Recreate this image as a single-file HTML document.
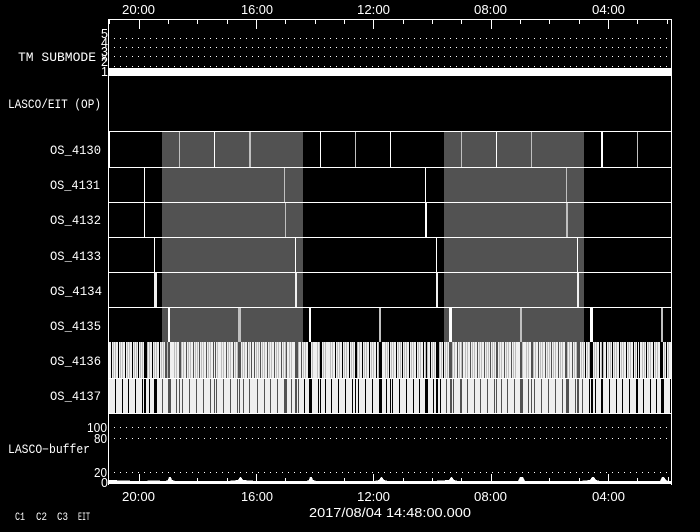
<!DOCTYPE html>
<html><head><meta charset="utf-8"><style>
html,body{margin:0;padding:0;background:#000;width:700px;height:532px;overflow:hidden}
svg{display:block}
text{font-family:"Liberation Mono",monospace;fill:#fff;font-size:12.5px}
.t{font-family:"Liberation Sans",sans-serif;font-size:12.5px}
</style></head><body>
<svg width="700" height="532" viewBox="0 0 700 532" xmlns="http://www.w3.org/2000/svg" shape-rendering="crispEdges">
<rect width="700" height="532" fill="#000"/>
<!-- gray regions -->
<path fill="#525252" d="M162 132h141v210h-141zM444 132h140v210h-140z"/>
<!-- bar rows -->
<rect x="109" y="342" width="562" height="36" fill="#f0f0f0"/>
<rect x="109" y="378" width="562" height="35" fill="#eeeeee"/>
<path stroke="#bdbdbd" stroke-width="36" fill="none" d="M113 360h1m1 0h1M120 360h1m1 0h1M127 360h1m1 0h1M134 360h1m1 0h1M140 360h1m1 0h1M147 360h1m1 0h1M154 360h1m1 0h1M161 360h1m1 0h1M167 360h1m1 0h1M174 360h1m1 0h1M181 360h1m1 0h1M188 360h1m1 0h1M195 360h1m1 0h1M201 360h1m1 0h1M208 360h1m1 0h1M215 360h1m1 0h1M221 360h1m1 0h1M228 360h1m1 0h1M235 360h1m1 0h1M242 360h1m1 0h1M249 360h1m1 0h1M256 360h1m1 0h1M262 360h1m1 0h1M269 360h1m1 0h1M276 360h1m1 0h1M283 360h1m1 0h1M289 360h1m1 0h1M296 360h1m1 0h1M303 360h1m1 0h1M310 360h1m1 0h1M317 360h1m1 0h1M323 360h1m1 0h1M330 360h1m1 0h1M337 360h1m1 0h1M344 360h1m1 0h1M351 360h1m1 0h1M357 360h1m1 0h1M364 360h1m1 0h1M371 360h1m1 0h1M378 360h1m1 0h1M385 360h1m1 0h1M391 360h1m1 0h1M398 360h1m1 0h1M404 360h1m1 0h1M411 360h1m1 0h1M418 360h1m1 0h1M425 360h1m1 0h1M432 360h1m1 0h1M439 360h1m1 0h1M445 360h1m1 0h1M452 360h1m1 0h1M459 360h1m1 0h1M465 360h1m1 0h1M472 360h1m1 0h1M479 360h1m1 0h1M486 360h1m1 0h1M492 360h1m1 0h1M499 360h1m1 0h1M506 360h1m1 0h1M513 360h1m1 0h1M520 360h1m1 0h1M526 360h1m1 0h1M533 360h1m1 0h1M540 360h1m1 0h1M547 360h1m1 0h1M553 360h1m1 0h1M560 360h1m1 0h1M567 360h1m1 0h1M574 360h1m1 0h1M581 360h1m1 0h1M587 360h1m1 0h1M594 360h1m1 0h1M601 360h1m1 0h1M608 360h1m1 0h1M614 360h1m1 0h1M621 360h1m1 0h1M628 360h1m1 0h1M635 360h1m1 0h1M642 360h1m1 0h1M648 360h1m1 0h1M655 360h1m1 0h1M662 360h1m1 0h1M668 360h1"/>
<path stroke="#000" stroke-width="36" fill="none" d="M111 360h1M118 360h1M125 360h1M132 360h1M138 360h1M144 360h3M152 360h1M159 360h1M308 360h3M320 360h2M335 360h1M342 360h1M349 360h1M355 360h2M362 360h1M369 360h1M376 360h1M379 360h3M389 360h1M396 360h1M402 360h1M409 360h1M416 360h1M423 360h1M426 360h1M430 360h1M436 360h3M443 360h1M585 360h1M590 360h3M599 360h1M602 360h1M606 360h1M612 360h1M619 360h1M626 360h1M633 360h1M637 360h1M639 360h1M646 360h1M653 360h1M660 360h3M666 360h1"/>
<path stroke="#525252" stroke-width="36" fill="none" d="M165 360h2M168 360h2M179 360h2M186 360h1M193 360h1M199 360h1M206 360h1M213 360h1M215 360h1M226 360h1M233 360h1M238 360h3M247 360h1M251 360h1M254 360h1M260 360h1M267 360h1M274 360h1M281 360h1M286 360h1M295 360h3M301 360h1M449 360h3M457 360h1M462 360h1M470 360h1M477 360h1M484 360h1M490 360h1M496 360h2M504 360h1M511 360h1M520 360h2M531 360h2M538 360h1M545 360h1M551 360h1M558 360h1M565 360h2M572 360h1M577 360h3"/>
<path stroke="#000" stroke-width="35" fill="none" d="M115 395.5h1M122 395.5h1M128 395.5h1M135 395.5h1M142 395.5h1M144 395.5h2M149 395.5h1M154 395.5h3M304 395.5h1M309 395.5h3M318 395.5h1M320 395.5h1M325 395.5h1M331 395.5h1M338 395.5h1M345 395.5h1M352 395.5h1M355 395.5h1M358 395.5h1M365 395.5h1M372 395.5h1M379 395.5h3M386 395.5h1M390 395.5h1M392 395.5h1M399 395.5h1M406 395.5h1M413 395.5h1M419 395.5h1M425 395.5h3M433 395.5h1M436 395.5h2M440 395.5h1M589 395.5h1M591 395.5h2M595 395.5h1M601 395.5h2M609 395.5h1M616 395.5h1M622 395.5h1M629 395.5h1M636 395.5h2M643 395.5h1M650 395.5h1M656 395.5h1M661 395.5h3M670 395.5h1"/>
<path stroke="#525252" stroke-width="35" fill="none" d="M162 395.5h1M168 395.5h3M176 395.5h1M179 395.5h1M182 395.5h1M189 395.5h1M196 395.5h1M203 395.5h1M210 395.5h1M214 395.5h1M216 395.5h1M223 395.5h1M230 395.5h1M237 395.5h1M239 395.5h1M243 395.5h1M249 395.5h1M257 395.5h1M264 395.5h1M270 395.5h1M277 395.5h1M284 395.5h3M291 395.5h1M295 395.5h2M298 395.5h1M446 395.5h1M450 395.5h2M453 395.5h1M460 395.5h2M467 395.5h1M474 395.5h1M480 395.5h1M487 395.5h1M494 395.5h1M496 395.5h1M501 395.5h1M507 395.5h1M514 395.5h1M520 395.5h3M528 395.5h1M531 395.5h1M534 395.5h1M541 395.5h1M548 395.5h1M555 395.5h1M562 395.5h1M566 395.5h3M575 395.5h1M577 395.5h2M582 395.5h1"/>
<!-- event bars -->
<path fill="#fff" d="M214 132h1v35h-1zM320 132h1v35h-1zM390 132h1v35h-1zM496 132h1v35h-1zM601 132h2v35h-2zM109 132h1v35h-1zM144 167h1v70h-1zM425 167h1v35h-1zM425 202h2v35h-2zM154 237h1v35h-1zM295 237h1v35h-1zM436 237h1v35h-1zM577 237h1v35h-1zM168 307h2v35h-2zM309 307h2v35h-2zM449 307h3v35h-3zM590 307h3v35h-3z"/>
<path fill="#f0f0f0" d="M154 272h3v35h-3zM295 272h2v35h-2zM436 272h2v35h-2zM577 272h2v35h-2z"/>
<path fill="#c0c0c0" d="M179 132h1v35h-1zM249 132h2v35h-2zM355 132h1v35h-1zM461 132h1v35h-1zM531 132h1v35h-1zM637 132h1v35h-1zM284 167h1v35h-1zM566 167h1v35h-1zM285 202h1v35h-1zM566 202h2v35h-2zM238 307h3v35h-3zM379 307h2v35h-2zM520 307h2v35h-2zM661 307h2v35h-2z"/>
<!-- frames -->
<path fill="#fff" d="M108 19h564v1h-564zM108 19h1v466h-1zM671 19h1v466h-1zM108 68h564v8h-564zM108 131h564v1h-564zM108 167h564v1h-564zM108 202h564v1h-564zM108 237h564v1h-564zM108 272h564v1h-564zM108 307h564v1h-564zM108 378h564v1h-564zM108 413h564v1h-564z"/>
<!-- top ticks -->
<path fill="#fff" d="M139 20h1v9h-1zM256 20h1v9h-1zM373 20h1v9h-1zM491 20h1v9h-1zM608 20h1v9h-1zM168 20h1v4h-1zM197 20h1v4h-1zM227 20h1v4h-1zM285 20h1v4h-1zM315 20h1v4h-1zM344 20h1v4h-1zM403 20h1v4h-1zM432 20h1v4h-1zM461 20h1v4h-1zM520 20h1v4h-1zM549 20h1v4h-1zM579 20h1v4h-1zM637 20h1v4h-1zM667 20h1v4h-1zM109 20h1v4h-1z"/>
<!-- dots -->
<g stroke="#fff" stroke-width="1" stroke-dasharray="1 5" fill="none">
<path d="M114 38.5H668M114 47.5H668M114 56.5H668M114 66.5H668M114 427.5H668M114 438.5H668M114 472.5H668"/>
</g>
<!-- buffer trace -->
<path fill="#fff" d="M109 484V480L125 480.5L135 481H139V474H140V481L155 480.500L165 481L168 480L169 477H171L172 480L175 481L197 481V478H198V481L227 481V478H228V481L238 480L240 477H241L243 480L256 481V474H257V481L285 481V478H286V481L306 481L309 480L310 477H312L313 480L316 481L344 481V478H345V481L373 481V474H374V481L379 480L381 477H382L384 480L388 481L403 481V478H404V481L432 481V478H433V481L449 480L451 477H452L454 480L458 481L461 481V478H462V481L491 481V474H492V481L518 481L520 477H523L525 481L549 481V478H550V481L579 481V478H580V481L590 480L592 477H594L596 480L600 481L608 481V474H609V481L637 481V478H638V481L660 481L662 477H664L666 480L668 481V477H669V481L672 481V484Z"/>
<!-- top labels -->
<text class="t" x="122" y="14" textLength="33" lengthAdjust="spacingAndGlyphs">20:00</text>
<text class="t" x="241" y="14" textLength="32" lengthAdjust="spacingAndGlyphs">16:00</text>
<text class="t" x="357" y="14" textLength="33" lengthAdjust="spacingAndGlyphs">12:00</text>
<text class="t" x="474" y="14" textLength="33" lengthAdjust="spacingAndGlyphs">08:00</text>
<text class="t" x="592" y="14" textLength="33" lengthAdjust="spacingAndGlyphs">04:00</text>
<!-- bottom labels -->
<text class="t" x="122" y="501" textLength="33" lengthAdjust="spacingAndGlyphs">20:00</text>
<text class="t" x="241" y="501" textLength="32" lengthAdjust="spacingAndGlyphs">16:00</text>
<text class="t" x="357" y="501" textLength="33" lengthAdjust="spacingAndGlyphs">12:00</text>
<text class="t" x="474" y="501" textLength="33" lengthAdjust="spacingAndGlyphs">08:00</text>
<text class="t" x="592" y="501" textLength="33" lengthAdjust="spacingAndGlyphs">04:00</text>
<text class="t" x="309" y="517" textLength="162" lengthAdjust="spacingAndGlyphs">2017/08/04 14:48:00.000</text>
<!-- y labels -->
<text class="t" x="101" y="38">5</text>
<text class="t" x="101" y="47">4</text>
<text class="t" x="101" y="56">3</text>
<text x="101" y="61" style="font-size:10px">x</text>
<text class="t" x="101" y="66">2</text>
<text class="t" x="101" y="76">1</text>
<text x="18" y="61" textLength="78" lengthAdjust="spacingAndGlyphs">TM SUBMODE</text>
<text x="8" y="108" textLength="93" lengthAdjust="spacingAndGlyphs">LASCO/EIT (OP)</text>
<text x="50" y="154" textLength="51" lengthAdjust="spacingAndGlyphs">OS_4130</text>
<text x="50" y="189" textLength="50" lengthAdjust="spacingAndGlyphs">OS_4131</text>
<text x="50" y="224" textLength="51" lengthAdjust="spacingAndGlyphs">OS_4132</text>
<text x="50" y="260" textLength="51" lengthAdjust="spacingAndGlyphs">OS_4133</text>
<text x="50" y="295" textLength="52" lengthAdjust="spacingAndGlyphs">OS_4134</text>
<text x="50" y="330" textLength="51" lengthAdjust="spacingAndGlyphs">OS_4135</text>
<text x="50" y="365" textLength="51" lengthAdjust="spacingAndGlyphs">OS_4136</text>
<text x="50" y="400" textLength="51" lengthAdjust="spacingAndGlyphs">OS_4137</text>
<text x="8" y="453" textLength="82" lengthAdjust="spacingAndGlyphs">LASCO−buffer</text>
<text class="t" x="87" y="432" textLength="20" lengthAdjust="spacingAndGlyphs">100</text>
<text class="t" x="94" y="443" textLength="13" lengthAdjust="spacingAndGlyphs">80</text>
<text class="t" x="94" y="477" textLength="13" lengthAdjust="spacingAndGlyphs">20</text>
<text class="t" x="101" y="487">0</text>
<text x="15" y="520" style="font-size:11px" textLength="10" lengthAdjust="spacingAndGlyphs">C1</text>
<text x="36" y="520" style="font-size:11px" textLength="11" lengthAdjust="spacingAndGlyphs">C2</text>
<text x="57" y="520" style="font-size:11px" textLength="11" lengthAdjust="spacingAndGlyphs">C3</text>
<text x="78" y="520" style="font-size:11px" textLength="12" lengthAdjust="spacingAndGlyphs">EIT</text>
</svg>
</body></html>
